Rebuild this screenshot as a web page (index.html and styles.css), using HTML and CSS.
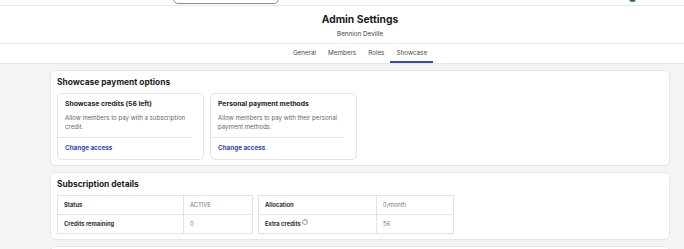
FILE: index.html
```html
<!DOCTYPE html>
<html lang="en">
<head>
    <meta charset="UTF-8">
    <meta name="viewport" content="width=device-width, initial-scale=1.0">
    <title>Admin Settings</title>
    <link rel="stylesheet" href="styles.css">
</head>
<body>
    <div class="topbar">
        <div class="search"></div>
        <div class="avatar"></div>
    </div>

    <div class="header">
        <h1>Admin Settings</h1>
        <p class="sub">Bennion Deville</p>
    </div>

    <div class="tabs">
        <a class="tab">General</a>
        <a class="tab">Members</a>
        <a class="tab">Roles</a>
        <a class="tab active">Showcase</a>
    </div>

    <div class="main">
        <div class="card">
            <h2>Showcase payment options</h2>
            <div class="options">
                <div class="option">
                    <h3>Showcase credits (56 left)</h3>
                    <p>Allow members to pay with a subscription credit.</p>
                    <hr>
                    <a class="link">Change access</a>
                </div>
                <div class="option">
                    <h3>Personal payment methods</h3>
                    <p>Allow members to pay with their personal payment methods.</p>
                    <hr>
                    <a class="link">Change access</a>
                </div>
            </div>
        </div>

        <div class="card">
            <h2>Subscription details</h2>
            <div class="tables">
                <div class="grid first">
                    <div class="cell label">Status</div>
                    <div class="cell value">ACTIVE</div>
                    <div class="cell label">Credits remaining</div>
                    <div class="cell value">0</div>
                </div>
                <div class="grid second">
                    <div class="cell label">Allocation</div>
                    <div class="cell value">0/month</div>
                    <div class="cell label">Extra credits <span class="help">?</span></div>
                    <div class="cell value">56</div>
                </div>
            </div>
        </div>

        <div class="card last"></div>
    </div>
</body>
</html>
```

FILE: styles.css
```css
body {
    font-family: Inter, "Noto Sans", sans-serif;
    background-color: #f4f4f4;
    margin: 0;
    padding: 0;
    color: #1b1b1b;
    height: 249px;
    overflow: hidden;
}

.topbar {
    height: 5px;
    background-color: #fff;
    border-bottom: 1px solid #e6e6e6;
    display: flex;
    align-items: flex-end;
    overflow: hidden;
}
.search {
    width: 104px;
    height: 20px;
    margin-left: 173px;
    margin-bottom: 1px;
    border: 1px solid #8c8c8c;
    border-radius: 5px;
    flex-shrink: 0;
}
.avatar {
    width: 7px;
    height: 7px;
    margin-left: 350px;
    margin-bottom: 3px;
    border-radius: 50%;
    background-color: #1d6b7c;
    flex-shrink: 0;
}

.header {
    background-color: #fff;
    padding-left: 36px;
    height: 37px;
    border-bottom: 1px solid #ececec;
    text-align: center;
}
h1 {
    margin: 0;
    padding-top: 6px;
    font-size: 10.3px;
    line-height: 14px;
    font-weight: 700;
}
.sub {
    margin: 4px 0 0;
    font-size: 6.3px;
    line-height: 9px;
    color: #444;
}

.tabs {
    background-color: #fff;
    padding-left: 36px;
    height: 19px;
    border-bottom: 1px solid #e6e6e6;
    display: flex;
    justify-content: center;
}
.tab {
    padding: 0 6px;
    font-size: 6.3px;
    line-height: 19px;
    color: #4a4a4a;
    border-bottom: 2px solid transparent;
    height: 17px;
}
.tab.active {
    border-bottom-color: #3548c4;
}

.main {
    padding: 6px 14px 0 50px;
    display: flex;
    flex-direction: column;
    gap: 6px;
}

.card {
    background-color: #fff;
    border: 1px solid #e6e6e6;
    border-radius: 5px;
    padding: 5px 6px 5px;
}
.card.last {
    height: 20px;
}
h2 {
    margin: 0 0 5px;
    font-size: 8.4px;
    line-height: 12px;
    font-weight: 700;
}

.options {
    display: flex;
    gap: 6px;
}
.option {
    width: 145px;
    border: 1px solid #e3e3e3;
    border-radius: 5px;
}
.option h3 {
    margin: 0;
    padding: 5px 7px 0;
    font-size: 6.8px;
    line-height: 10px;
    font-weight: 700;
}
.option p {
    margin: 4px 0 0;
    padding: 0 7px;
    font-size: 6.1px;
    line-height: 9px;
    color: #666;
}
.option hr {
    margin: 6px 12px 0 0;
    border: none;
    border-top: 1px solid #e6e6e6;
}
.link {
    display: block;
    padding: 5px 7px 6px;
    font-size: 6.3px;
    line-height: 10px;
    font-weight: 700;
    color: #3046c2;
}

.tables {
    display: flex;
    gap: 5px;
}
.grid {
    display: grid;
    border: 1px solid #e3e3e3;
}
.grid.first {
    grid-template-columns: 126px 68px;
}
.grid.second {
    grid-template-columns: 118px 76px;
}
.cell {
    height: 18px;
    line-height: 18px;
    padding-left: 6px;
    font-size: 5.8px;
    border-bottom: 1px solid #e3e3e3;
}
.cell:nth-last-child(-n+2) {
    border-bottom: none;
}
.cell.label {
    font-weight: 700;
    color: #333;
    border-right: 1px solid #e3e3e3;
}
.cell.value {
    color: #777;
}
.help {
    display: inline-block;
    width: 4px;
    height: 4px;
    border: 0.5px solid #999;
    border-radius: 50%;
    font-size: 3.5px;
    line-height: 4px;
    text-align: center;
    vertical-align: 3px;
    font-weight: 400;
    color: #888;
}
```
